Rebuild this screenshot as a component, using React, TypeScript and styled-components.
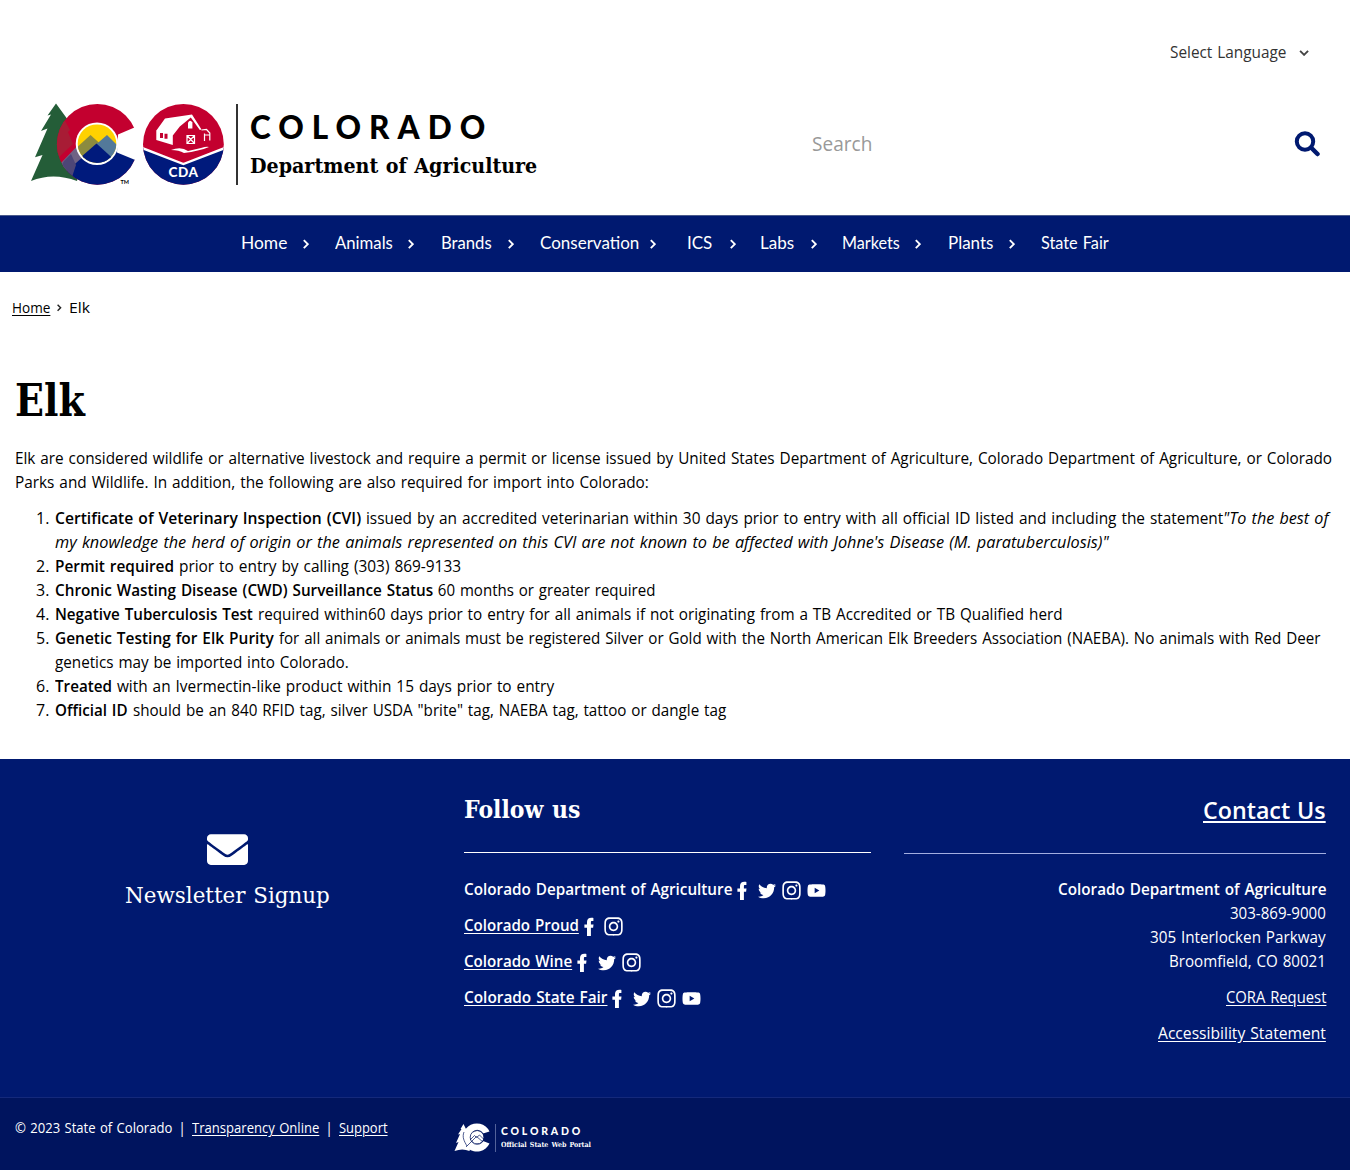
import React, { useLayoutEffect, useRef, useState } from "react";
import styled, { createGlobalStyle } from "styled-components";
import { FaInstagram, FaTwitter, FaYoutube, FaEnvelope } from "react-icons/fa";

const sans = `"Open Sans", "Noto Sans", sans-serif`;
const geo = `Lato, sans-serif`;
const slab = `"DejaVu Serif", serif`;
const navy = "#001970";

const Global = createGlobalStyle`
  * { box-sizing: border-box; }
  body {
    margin: 0; background: #fff; color: #000; font: 16px/24px ${sans};
    word-spacing: 1px; font-variant-ligatures: none;
  }
  a { color: inherit; text-decoration: none; }
`;

const Measure = styled.span`
  display: inline-block;
  white-space: pre;
  flex: none;
`;
const Glyphs = styled.span<{ $u?: boolean }>`
  display: inline-block;
  transform-origin: 0 50%;
  text-decoration: ${(p) => (p.$u ? "underline" : "none")};
  text-underline-offset: 1.5px;
`;

/* Condenses or widens its text so that it fills a given measure. */
function Fit({ w, u, children }: { w: number; u?: boolean; children: string }) {
  const ref = useRef<HTMLSpanElement>(null);
  const [scale, setScale] = useState(1);
  useLayoutEffect(() => {
    setScale(w / ref.current!.offsetWidth);
  }, [w]);
  return (
    <Measure style={{ width: w }}>
      <Glyphs ref={ref} $u={u} style={{ transform: `scaleX(${scale})` }}>{children}</Glyphs>
    </Measure>
  );
}

const Page = styled.div`width: 1350px; height: 1171px; overflow: hidden;`;
const Header = styled.header`height: 215px; padding: 40px 30px 0;`;
const Language = styled.div`
  display: flex; justify-content: flex-end; align-items: center; gap: 13px;
  height: 24px; padding-right: 11px; color: #333; & > svg { margin-top: 2px; }
`;
const Brand = styled.div`display: flex; align-items: flex-start; height: 90px; margin-top: 36px;`;
const BrandText = styled.div`
  margin: 4px 0 0 10px; width: 289px; padding-left: 12px; height: 81px; border-left: 2px solid #333; flex: none;
`;
const State = styled.div`font: 900 31.500px/46px ${geo}; letter-spacing: 8px; white-space: nowrap;`;
const Dept = styled.div`font: bold 21px/31px ${slab};`;
const Search = styled.div`
  display: flex; flex: 1; align-items: center; justify-content: space-between; height: 88px;
  margin-left: 287px; color: #999; font-size: 20px;
`;

const Nav = styled.nav`
  display: flex; align-items: center; height: 57px; padding: 0 0 2px 241px; border-top: 1px solid #4a5a8c;
  background: ${navy}; color: #fff; font: 17px/24px ${geo};
`;
const NavItem = styled.div<{ $w: number }>`
  display: flex; align-items: center; width: ${(p) => p.$w}px; flex: none;
`;
const NavArrow = styled.span<{ $gap: number }>`display: flex; margin: 2px 0 0 ${(p) => p.$gap}px;`;

const Crumbs = styled.div`display: flex; gap: 6px; padding: 23px 12px 0; font-size: 15px; height: 98px; align-items: flex-start;`;
const CrumbArrow = styled.span`display: flex; align-items: center; justify-content: center; height: 26px; width: 7px;`;
const Main = styled.main`height: 389px; padding: 0 15px;`;
const Title = styled.h1`margin: 0; height: 76px; font: bold 44px/62px ${slab};`;
const Para = styled.div`margin: 0 0 12px;`;
const Line = styled.div`display: flex; height: 24px;`;
const List = styled.div`padding-left: 40px;`;
const Num = styled.span`width: 20px; margin-left: -19px; margin-right: -1px; flex: none;`;
const B = styled.b`font-weight: 600;`;

const Footer = styled.footer`
  display: grid; grid-template-columns: 440px 440px 1fr; height: 338px; background: ${navy}; color: #fff;
`;
const Newsletter = styled.div`
  display: flex; flex-direction: column; align-items: center; padding: 70px 0 0 15px;
  font: 23px/30px ${slab};
`;
const SignupLabel = styled.div`margin-top: 10px;`;
const Follow = styled.div`padding: 33px 9px 0 24px;`;
const FooterHeading = styled.h2`margin: 0; height: 61px; font: bold 23.500px/36px ${slab}; border-bottom: 1px solid #fff;`;
const SocialRow = styled.div`display: flex; align-items: center; height: 24px; margin-top: 12px; &:first-of-type { margin-top: 24px; }`;
const Icons = styled.span`display: flex; align-items: center; margin-left: 5px; gap: 6px; padding-top: 3px;`;
const Slot = styled.span<{ $w: number }>`display: flex; justify-content: center; align-items: center; width: ${(p) => p.$w}px; & > svg { flex: none; }`;
const Contact = styled.div`display: flex; flex-direction: column; align-items: flex-end; padding: 33px 24px 0;`;
const ContactHeading = styled.h2`
  display: flex; justify-content: flex-end; margin: 0 0 23px; height: 62px; width: 422px;
  font: 600 24px/36px ${sans}; border-bottom: 1px solid #a3aee0;
`;
const ContactLink = styled.a`margin-top: 12px;`;

const Legal = styled.div`
  display: flex; height: 73px; padding: 18px 15px 0; border-top: 1px solid #14297b; background: #00145e; color: #fff;
  font-size: 14px;
`;
const LegalText = styled.div`display: flex; width: 439px; flex: none;`;
const Bar = styled.span`width: 20px; text-align: center; flex: none;`;
const Portal = styled.div`display: flex; align-items: flex-start; padding-top: 7px;`;
const PortalText = styled.div`margin: 1px 0 0 4px; padding-left: 5px; border-left: 1px solid #53629a; height: 28px;`;
const PortalState = styled.div`font: 900 10.500px/15px ${geo}; letter-spacing: 2.800px; height: 15px;`;
const PortalSub = styled.div`font: bold 7px/12px ${slab};`;

const Chevron = ({ s = 6, c = "#fff", down = false }: { s?: number; c?: string; down?: boolean }) => (
  <svg width={down ? s * 1.7 : s} height={down ? s : s * 1.7} viewBox={down ? "0 0 10 6" : "0 0 6 10"} fill="none" stroke={c} strokeWidth="1.9">
    <path d={down ? "M1 .8 5 4.8 9 .8" : "M.8 1 4.8 5 .8 9"} />
  </svg>
);

const Fb = () => (
  <svg width="14" height="20" viewBox="0 0 14 20" fill="#fff">
    <path d="M3 19V10.800H.4V7.400h2.600V5C3 2.100 4.600.7 7.400.7c1.100 0 1.800.1 2 .2V4H7.900C6.900 4 6.900 4.600 6.900 5.400v2h2.600l-.4 3.400H6.900V19z" />
  </svg>
);

const Logo = () => (
  <svg width="196" height="88" viewBox="30 100 196 88">
    <defs>
      <clipPath id="disc"><circle cx="97.3" cy="144.3" r="40.4" /></clipPath>
      <clipPath id="sun"><circle cx="97" cy="143.700" r="19.300" /></clipPath>
      <clipPath id="seal"><circle cx="183.400" cy="144.300" r="40.400" /></clipPath>
    </defs>
    <path d="M56 103.500 47.500 115.500l3.500-1-10 16.500 6.500-2.500L35 157.200l7.500-2.200L31 181q22-9 46 0L84 150 68 120z" fill="#245d38" />
    <g clipPath="url(#disc)">
      <path d="M50 100h100v95H50z" fill="#c3002f" />
      <path d="M64 172 97 130l50 30v38H75l-10-15z" fill="#001a7c" />
      <path d="M58 166 85 138l9 9-27 24-4 4z" fill="#6f6284" />
      <path d="M56 104 65 116l-1 3 6 11-2 2 5 12-17 16z" fill="#a81c35" />
      <path d="M72 177 60 168l4-7 7-7 5 11z" fill="#4d4677" />
    </g>
    <path d="m118 134.400 17-7.200h5v34l-6-1.800-17-7z" fill="#fff" />
    <circle cx="97" cy="143.700" r="21.300" fill="#fff" />
    <g clipPath="url(#sun)">
      <path d="M77 124h41v40H77z" fill="#ffd100" />
      <path d="m75 149 15.500-14 10 9-15 17z" fill="#8c8b3f" />
      <path d="m92 148 15-13 13 13v15H98z" fill="#53799a" />
      <path d="m73 164 23.500-20.500L121 166z" fill="#001a7c" />
    </g>
    <text x="120.500" y="184" fontFamily="Lato" fontWeight="700" fontSize="5.500">TM</text>
    <g clipPath="url(#seal)">
      <path d="M142 103h83v84h-83z" fill="#c3002f" />
      <path d="m142 147.500 41.400 16.500 41.600-16.500V187h-83z" fill="#001a7c" />
      <path d="m142 148 41.400 16 41.600-16" fill="none" stroke="#fff" strokeWidth="2.400" />
    </g>
    <path d="m156 131 9-12.500 27-4 9.500 15-1.700.5-9-12.500-11 9-7 9v9.500l-16.500-5v-9z" fill="#fff" />
    <path d="M160 133h3v5h-3zm4.500.8h3v5h-3z" fill="#c3002f" />
    <path d="M188 122.500q2.200-3.500 4.400 0v6H188z" fill="#fff" />
    <path d="M187 135.500h7.500v8H187zm0 0 7.500 8m0-8-7.500 8M204.500 133.500v7.500m0-6h5.300v5.500m0-5.500v-2l-3.300-3.500-5 .5" fill="none" stroke="#fff" strokeWidth="1.200" />
    <path d="M171 150q10-4 17 1l13-3q6-2 8-1-10 4-25 6-5-3-13-3z" fill="#fff" />
    <text x="183.500" y="176.500" textAnchor="middle" fontFamily="Lato" fontWeight="900" fontSize="13.500" letterSpacing=".5" fill="#fff">CDA</text>
  </svg>
);

const MiniLogo = () => (
  <svg width="37" height="30" viewBox="0 0 37 30">
    <path d="M9.500 1 6.500 6l1 0L4 11.500l2-.5L2 20l2.500-1L.5 28q8-3 15 0L20 10l-8-4z" fill="#fff" />
    <path d="M35.500 8.500A14 14 0 1 0 35.500 20.500L29 18a6.800 6.800 0 1 1 0-7.500z" fill="#fff" />
    <circle cx="23.200" cy="14.300" r="6.300" fill="#fff" />
    <path d="M12 24 22.500 13.500 29 19M16 17l4.500-4.500 2 2 3-2.500 4 4M10 9c-2 5 0 9 3 14" fill="none" stroke="#00145e" strokeWidth=".7" />
    <circle cx="23.200" cy="14.300" r="7" fill="none" stroke="#00145e" strokeWidth=".8" />
  </svg>
);

const nav: [string, number, number, number][] = [
  ["Home", 46, 94, 16], ["Animals", 58, 106, 15], ["Brands", 51, 99, 16], ["Conservation", 99, 147, 11],
  ["ICS", 25, 73, 18], ["Labs", 34, 82, 17], ["Markets", 58, 106, 15], ["Plants", 45, 93, 16], ["State Fair", 68, 68, 0],
];

const social: [string, number, boolean, string][] = [
  ["Colorado Department of Agriculture", 268, false, "ftiy"], ["Colorado Proud", 115, true, "fi"],
  ["Colorado Wine", 108, true, "fti"], ["Colorado State Fair", 143, true, "ftiy"],
];

type Seg = [string, number, ("b" | "i")?];
const items: Seg[][][] = [
  [[["Certificate of Veterinary Inspection (CVI)", 306, "b"], [" issued by an accredited veterinarian within 30 days prior to entry with all official ID listed and including the statement", 862], ["\"To the best of", 105, "i"]],
   [["my knowledge the herd of origin or the animals represented on this CVI are not known to be affected with Johne's Disease (M. paratuberculosis)\"", 1054, "i"]]],
  [[["Permit required", 119, "b"], [" prior to entry by calling (303) 869-9133", 287]]],
  [[["Chronic Wasting Disease (CWD) Surveillance Status", 378, "b"], [" 60 months or greater required", 222]]],
  [[["Negative Tuberculosis Test", 198, "b"], [" required within60 days prior to entry for all animals if not originating from a TB Accredited or TB Qualified herd", 810]]],
  [[["Genetic Testing for Elk Purity", 219, "b"], [" for all animals or animals must be registered Silver or Gold with the North American Elk Breeders Association (NAEBA). No animals with Red Deer", 1046]],
   [["genetics may be imported into Colorado.", 294]]],
  [[["Treated", 57, "b"], [" with an Ivermectin-like product within 15 days prior to entry", 442]]],
  [[["Official ID", 73, "b"], [" should be an 840 RFID tag, silver USDA \"brite\" tag, NAEBA tag, tattoo or dangle tag", 598]]],
];

const glyph: Record<string, React.ReactNode> = {
  f: <Fb />, t: <FaTwitter size={18} />, i: <FaInstagram size={21} />, y: <FaYoutube size={19} />,
};

export default function App() {
  return (
    <Page>
      <Global />
      <Header>
        <Language><Fit w={116}>Select Language</Fit><Chevron down c="#444" /></Language>
        <Brand>
          <Logo />
          <BrandText>
            <State>COLORADO</State>
            <Dept><Fit w={287}>Department of Agriculture</Fit></Dept>
          </BrandText>
          <Search>
            <Fit w={60}>Search</Fit>
            <svg width="26" height="26" viewBox="0 0 26 26" fill="none" stroke={navy}>
              <circle cx="11" cy="10.500" r="8.200" strokeWidth="4" />
              <path d="m17 16.500 6.500 6.500" strokeWidth="4.500" strokeLinecap="round" />
            </svg>
          </Search>
        </Brand>
      </Header>
      <Nav>
        {nav.map(([t, w, total, gap]) => (
          <NavItem key={t} $w={total}>
            <Fit w={w}>{t}</Fit>
            {gap > 0 && <NavArrow $gap={gap}><Chevron /></NavArrow>}
          </NavItem>
        ))}
      </Nav>
      <Crumbs>
        <a><Fit w={38} u>Home</Fit></a>
        <CrumbArrow><Chevron s={4.500} c="#222" /></CrumbArrow>
        <Fit w={21}>Elk</Fit>
      </Crumbs>
      <Main>
        <Title><Fit w={70}>Elk</Fit></Title>
        <Para>
          <Line><Fit w={1317}>Elk are considered wildlife or alternative livestock and require a permit or license issued by United States Department of Agriculture, Colorado Department of Agriculture, or Colorado</Fit></Line>
          <Line><Fit w={634}>Parks and Wildlife. In addition, the following are also required for import into Colorado:</Fit></Line>
        </Para>
        <List>
          {items.map((lines, n) => (
            <div key={n}>
              {lines.map((segs, l) => (
                <Line key={l}>
                  {l === 0 && <Num><Fit w={13}>{`${n + 1}.`}</Fit></Num>}
                  {segs.map(([t, w, k]) =>
                    k === "b" ? <B key={t}><Fit w={w}>{t}</Fit></B> : k === "i" ? <i key={t}><Fit w={w}>{t}</Fit></i> : <Fit key={t} w={w}>{t}</Fit>
                  )}
                </Line>
              ))}
            </div>
          ))}
        </List>
      </Main>
      <Footer>
        <Newsletter>
          <FaEnvelope size={41} />
          <SignupLabel><Fit w={205}>Newsletter Signup</Fit></SignupLabel>
        </Newsletter>
        <Follow>
          <FooterHeading><Fit w={116}>Follow us</Fit></FooterHeading>
          {social.map(([t, w, link, icons]) => (
            <SocialRow key={t}>
              <B><Fit w={w} u={link}>{t}</Fit></B>
              <Icons>{icons.split("").map((k) => <Slot key={k} $w={k === "f" ? 14 : 19}>{glyph[k]}</Slot>)}</Icons>
            </SocialRow>
          ))}
        </Follow>
        <Contact>
          <ContactHeading><Fit w={123} u>Contact Us</Fit></ContactHeading>
          <B><Fit w={268}>Colorado Department of Agriculture</Fit></B>
          <Fit w={96}>303-869-9000</Fit>
          <Fit w={176}>305 Interlocken Parkway</Fit>
          <Fit w={157}>Broomfield, CO 80021</Fit>
          <ContactLink><Fit w={100} u>CORA Request</Fit></ContactLink>
          <ContactLink><Fit w={168} u>Accessibility Statement</Fit></ContactLink>
        </Contact>
      </Footer>
      <Legal>
        <LegalText>
          <Fit w={157}>© 2023 State of Colorado</Fit><Bar>|</Bar>
          <Fit w={127} u>Transparency Online</Fit><Bar>|</Bar>
          <Fit w={49} u>Support</Fit>
        </LegalText>
        <Portal>
          <MiniLogo />
          <PortalText>
            <PortalState>COLORADO</PortalState>
            <PortalSub><Fit w={90}>Official State Web Portal</Fit></PortalSub>
          </PortalText>
        </Portal>
      </Legal>
    </Page>
  );
}
